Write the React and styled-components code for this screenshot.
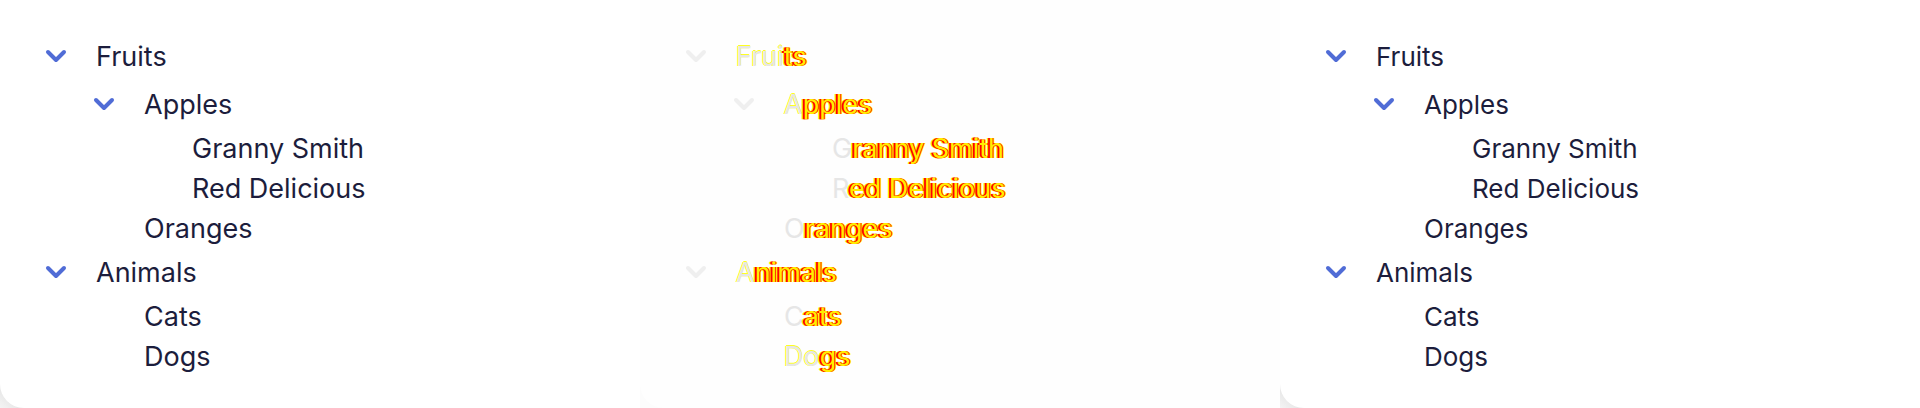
import React, { useState } from "react";
import styled, { createGlobalStyle, css } from "styled-components";

const GlobalStyle = createGlobalStyle`
  * { box-sizing: border-box; }
  body { margin: 0; background: #fff; }
`;

const Comparison = styled.main`
  display: grid;
  grid-template-columns: repeat(3, minmax(0, 1fr));
  font-family: Inter, "Open Sans", sans-serif;
  color: #1c1d3c;
`;

const Frame = styled.section`
  font-size: ${(p) => (p.$large ? "27px" : "26px")};
  background: ${(p) =>
    p.$diff
      ? "#fcfcfc"
      : "linear-gradient(45deg, #f4f4f4 0, #e9e9e9 12px, #e9e9e9 100%)"};
`;

const Card = styled.div`
  height: 100%;
  padding: 32px;
  background: ${(p) => (p.$diff ? "#fefefe" : "#fff")};
  border-bottom-left-radius: 24px;
`;

const Tree = styled.ul`
  margin: 0;
  padding: 0;
  list-style: none;
`;

const Branch = styled(Tree)`
  padding-left: 48px;
`;

const Row = styled.div`
  display: flex;
  align-items: center;
  gap: 16px;
  min-height: ${(p) => (p.$leaf ? "40px" : "48px")};
  padding-left: ${(p) => (p.$leaf ? "64px" : "0")};
`;

const Toggle = styled.button`
  display: flex;
  flex: none;
  width: 48px;
  height: 48px;
  padding: 0;
  border: 0;
  border-radius: 50%;
  background: none;
  color: ${(p) => (p.$diff ? "#efefef" : "#506cd6")};
  cursor: pointer;
`;

const Chevron = styled.svg`
  width: 48px;
  height: 48px;
  fill: none;
  stroke: currentColor;
  stroke-width: 4px;
  stroke-linecap: round;
  stroke-linejoin: round;
`;

const Label = styled.span`
  padding-top: 2px;
  line-height: 38px;
  white-space: nowrap;
`;

const Unchanged = styled.span`
  color: #e6e6e6;
  ${(p) =>
    p.$edge &&
    css`
      text-shadow: -1px 0 #ffff20, 0 -1px #ffff20;
    `}
`;

const Changed = styled.span`
  color: #ffee00;
  text-shadow: -1px 0 #ff0000, 1px 0 #ff1000, -2px 0 #ff0000, 2px 0 #ffff00,
    -3px 0 #ffff00;
`;

const data = [
  {
    name: "Fruits", same: 4, edge: true,
    children: [
      {
        name: "Apples", same: 1, edge: true,
        children: [
          { name: "Granny Smith", same: 1 },
          { name: "Red Delicious", same: 1 },
        ],
      },
      { name: "Oranges", same: 1 },
    ],
  },
  {
    name: "Animals", same: 1, edge: true,
    children: [
      { name: "Cats", same: 1 },
      { name: "Dogs", same: 2, edge: true },
    ],
  },
];

function Item({ node, diff }) {
  const [open, setOpen] = useState(true);
  const leaf = !node.children;
  return (
    <li>
      <Row $leaf={leaf}>
        {!leaf && (
          <Toggle
            type="button"
            $diff={diff}
            aria-label={node.name}
            aria-expanded={open}
            onClick={() => setOpen(!open)}
          >
            <Chevron viewBox="0 0 48 48" aria-hidden="true">
              <path d={open ? "M16 20l8 8 8-8" : "M20 16l8 8-8 8"} />
            </Chevron>
          </Toggle>
        )}
        <Label>
          {diff ? (
            <>
              <Unchanged $edge={node.edge}>{node.name.slice(0, node.same)}</Unchanged>
              <Changed>{node.name.slice(node.same)}</Changed>
            </>
          ) : (
            node.name
          )}
        </Label>
      </Row>
      {!leaf && open && (
        <Branch>
          {node.children.map((child) => (
            <Item key={child.name} node={child} diff={diff} />
          ))}
        </Branch>
      )}
    </li>
  );
}

function Panel({ diff = false, large = false }) {
  return (
    <Frame $diff={diff} $large={large}>
      <Card $diff={diff}>
        <Tree>
          {data.map((node) => (
            <Item key={node.name} node={node} diff={diff} />
          ))}
        </Tree>
      </Card>
    </Frame>
  );
}

export default function App() {
  return (
    <>
      <GlobalStyle />
      <Comparison>
        <Panel large />
        <Panel diff large />
        <Panel />
      </Comparison>
    </>
  );
}
